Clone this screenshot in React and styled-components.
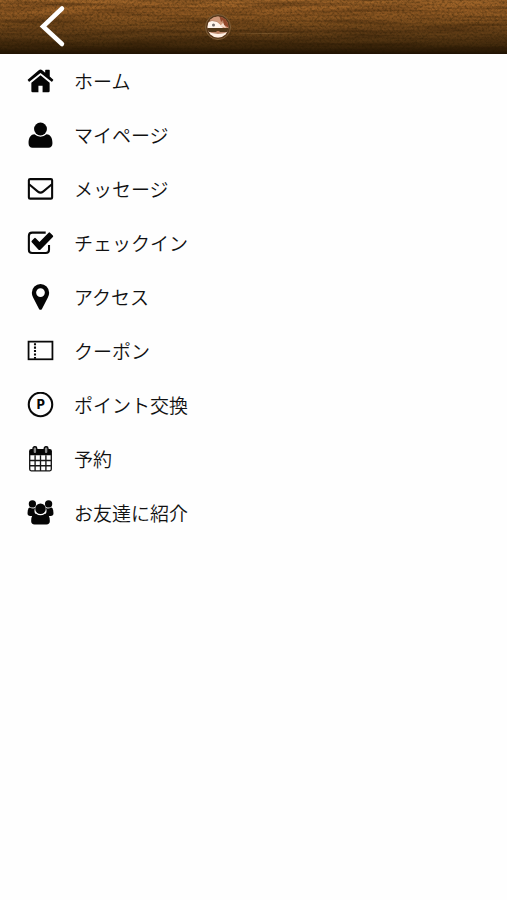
import React from "react";
import styled, { createGlobalStyle } from "styled-components";

const GlobalStyle = createGlobalStyle`
  * { box-sizing: border-box; }
  body {
    margin: 0;
    background: #fefefe;
    color: #111;
    font-family: "Noto Sans CJK JP", sans-serif;
    font-weight: 350;
  }
`;

const Page = styled.div`
  min-height: 100vh;
`;

const Header = styled.header`
  position: relative;
  display: grid;
  grid-template-columns: 2fr 3fr;
  align-items: center;
  height: 54px;
  overflow: hidden;
  background: linear-gradient(#a0652a 0, #985e25 10px, #7a4c1c 24px, #5e3b15 36px, #40280b 46px, #201203 54px);
`;

const Grain = styled.svg`
  position: absolute;
  inset: 0;
  width: 100%;
  height: 100%;
`;

const BackButton = styled.button`
  position: relative;
  justify-self: start;
  display: flex;
  margin-left: 32px;
  padding: 0;
  border: 0;
  background: none;
  cursor: pointer;
`;

const Brand = styled.a`
  position: relative;
  justify-self: start;
  display: flex;
`;

const Menu = styled.ul`
  margin: 0;
  padding: 0;
  list-style: none;
`;

const MenuLink = styled.a`
  display: flex;
  align-items: center;
  gap: 20px;
  height: 54px;
  padding: 0 27px;
  color: inherit;
  font-size: 19px;
  line-height: 28px;
  text-decoration: none;
`;

const Icon = styled.svg`
  flex: none;
  width: 27px;
  height: 27px;
  fill: #050505;
`;

const stroke = { fill: "none", stroke: "#080808", strokeWidth: 2 };

const items = [
  {
    label: "ホーム",
    icon: (
      <>
        <path d="M4.2 14.2 13 6.900l8.800 7.300v7.900q0 1.200-1.200 1.200H15v-6.200h-4v6.200H5.400q-1.200 0-1.200-1.200Z" />
        <path d="M13 1.500q.9 0 1.700.7l2.800 2.400V2.400q0-.6.600-.6h3.200q.6 0 .6.6v5.900l3.200 2.700q.5.400.1.900l-.9 1q-.4.500-.9.100L13 4.900 2.600 13q-.5.400-.9-.1l-.9-1q-.4-.5.1-.9l10.400-8.800q.8-.7 1.700-.7Z" />
      </>
    ),
  },
  {
    label: "マイページ",
    icon: (
      <>
        <circle cx="13" cy="6.800" r="6.200" />
        <path d="M7.200 11.800q2.400 2.300 5.800 2.300t5.800-2.300c4.100.2 5.700 4 5.700 8.600 0 2.700-1.500 4.300-3.800 4.300H5.300c-2.300 0-3.800-1.600-3.800-4.300 0-4.600 1.600-8.400 5.700-8.600Z" />
      </>
    ),
  },
  {
    label: "メッセージ",
    icon: (
      <g {...stroke}>
        <rect x="1.800" y="3" width="22.400" height="18.800" rx="1.200" />
        <path d="m2 8 8.500 7q2.500 2 5 0L24 8" />
      </g>
    ),
  },
  {
    label: "チェックイン",
    icon: (
      <>
        <path {...stroke} d="M18 2.500H5Q1.800 2.500 1.800 5.700V19q0 3.200 3.200 3.200h13q3.200 0 3.200-3.200v-4.500" />
        <path d="m4.600 10.300 2.400-2.400q.7-.7 1.400 0l3.600 3.600 8.800-8.900q.7-.7 1.400 0l2.700 2.700q.7.700 0 1.400L12.900 18.900q-.9.900-1.800 0l-6.500-7.200q-.7-.7 0-1.400Z" />
      </>
    ),
  },
  {
    label: "アクセス",
    icon: (
      <path
        fillRule="evenodd"
        d="M13 0a8.300 8.300 0 0 1 8.300 8.300c0 2-.5 3.300-1.200 4.700l-5.700 11q-.5.900-1.400.9t-1.400-.9L5.900 13c-.7-1.400-1.200-2.700-1.200-4.700A8.300 8.300 0 0 1 13 0Zm0 4.100a4.200 4.200 0 1 0 0 8.400 4.200 4.200 0 0 0 0-8.400Z"
      />
    ),
  },
  {
    label: "クーポン",
    icon: (
      <g {...stroke} strokeWidth="1.700">
        <rect x="1.500" y="3.500" width="23" height="17" />
        <path d="M7.700 5v15" strokeWidth="2" strokeDasharray="2 1.300" />
      </g>
    ),
  },
  {
    label: "ポイント交換",
    icon: (
      <>
        <circle cx="13" cy="12" r="11.300" {...stroke} />
        <text x="13.300" y="16" textAnchor="middle" fontFamily="Inter, sans-serif" fontSize="12" fontWeight="800">
          P
        </text>
      </>
    ),
  },
  {
    label: "予約",
    icon: (
      <>
        <path d="M4 3h18q2 0 2 2v4H2V5q0-2 2-2Z" />
        <path
          fill="none"
          stroke="#161616"
          strokeWidth="1.300"
          d="M2.600 8v14.500q0 1.400 1.400 1.400h18q1.400 0 1.400-1.400V8M7.800 9v15M13 9v15M18.200 9v15M3 14h20M3 19h20"
        />
        <g fill="#8a8a8a" stroke="#050505" strokeWidth="1.300">
          <rect x="5.800" y=".7" width="3.600" height="6.600" rx="1.600" />
          <rect x="16.600" y=".7" width="3.600" height="6.600" rx="1.600" />
        </g>
      </>
    ),
  },
  {
    label: "お友達に紹介",
    icon: (
      <>
        <circle cx="5.200" cy="3.800" r="3.500" />
        <circle cx="20.800" cy="3.800" r="3.500" />
        <path d="M2.500 7.300q3 1.400 5.300.5-1.600 3.800.8 6.200-2 .1-3.200 1.300H3.200Q.5 15.300.5 12.700q0-4.800 2-5.400ZM23.500 7.300q-3 1.400-5.300.5 1.600 3.800-.8 6.200 2 .1 3.200 1.300h2.200q2.700 0 2.700-2.600 0-4.800-2-5.400Z" />
        <circle cx="13" cy="8.500" r="5.100" />
        <path d="M8.700 13.200q1.900 1.500 4.300 1.500t4.300-1.500q4.700 0 4.700 7 0 3.300-3.300 3.300H7.300Q4 23.500 4 20.200q0-7 4.700-7Z" />
      </>
    ),
  },
];

export default function App() {
  return (
    <Page>
      <GlobalStyle />
      <Header>
        <Grain aria-hidden="true">
          <filter id="wood" x="0" y="0" width="100%" height="100%" colorInterpolationFilters="sRGB">
            <feTurbulence type="fractalNoise" baseFrequency="0.012 0.3" numOctaves="2" seed="3" />
            <feColorMatrix values="0 0 0 0 0.12  0 0 0 0 0.06  0 0 0 0 0  0.8 0 0 0 -0.3" />
          </filter>
          <filter id="grain" x="0" y="0" width="100%" height="100%" colorInterpolationFilters="sRGB">
            <feTurbulence type="fractalNoise" baseFrequency="0.4 0.5" numOctaves="2" seed="7" />
            <feColorMatrix values="0 0 0 0 0.12  0 0 0 0 0.08  0 0 0 0 0  0.9 0 0 0 -0.35" />
          </filter>
          <rect width="100%" height="100%" filter="url(#wood)" />
          <rect width="100%" height="100%" filter="url(#grain)" />
        </Grain>
        <BackButton type="button" aria-label="戻る">
          <svg width="40" height="48" viewBox="0 0 40 48" fill="none" stroke="#fff" strokeWidth="4.500">
            <path d="M30 5.500 11 23.500l19 17.500" strokeLinejoin="miter" strokeLinecap="round" />
          </svg>
        </BackButton>
        <Brand href="#home" aria-label="ホーム">
          <svg width="90" height="32" viewBox="0 0 90 32">
            <defs>
              <clipPath id="disc">
                <circle cx="15" cy="16" r="10.500" />
              </clipPath>
              <linearGradient id="rule">
                <stop offset="0" stopColor="#9b794a" stopOpacity="0.100" />
                <stop offset="0.500" stopColor="#9b794a" stopOpacity="0.350" />
                <stop offset="1" stopColor="#9b794a" stopOpacity="0.100" />
              </linearGradient>
            </defs>
            <circle cx="15" cy="16" r="12.500" fill="#58391b" stroke="#806039" strokeWidth="1" />
            <g clipPath="url(#disc)">
              <rect width="32" height="32" fill="#b9866a" />
              <path d="M3 17v-5l6-2 5 1 4 3 3 3Z" fill="#fff5ed" />
              <path d="m8 5 7-1 4 7 7 6h-6l-6-7-8-1Z" fill="#cf9879" />
              <path d="m16 3 8 5 2 9-5-3-1-5-2 2Z" fill="#91472a" />
              <path d="m17 15 3-3 3 5Z" fill="#f7ddce" />
              <circle cx="10.500" cy="14" r="1.500" fill="#736c6b" />
              <path d="M3 17h25v4H3Z" fill="#513719" />
              <path d="M4 20q5 3 11 3 7 0 12-3l-4 8H9Z" fill="#fff0e3" />
              <path d="m13 20 4 0-2 2Z" fill="#b97a59" />
            </g>
            <rect x="35" y="22" width="54" height="1" fill="url(#rule)" />
          </svg>
        </Brand>
      </Header>
      <nav aria-label="メニュー">
        <Menu>
          {items.map(({ label, icon }) => (
            <li key={label}>
              <MenuLink href="#menu">
                <Icon viewBox="0 0 26 26" aria-hidden="true">{icon}</Icon>
                <span>{label}</span>
              </MenuLink>
            </li>
          ))}
        </Menu>
      </nav>
    </Page>
  );
}
